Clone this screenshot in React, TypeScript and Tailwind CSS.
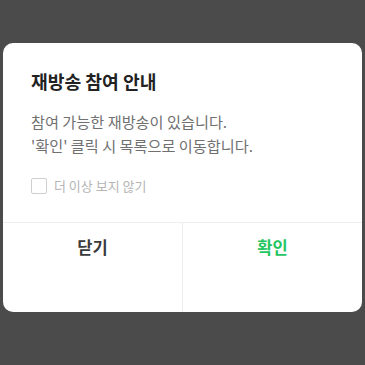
export default function App() {
  return (
    <div
      className="w-[365px] h-[365px] bg-[#4b4b4b] pt-[43px] px-[3px]"
      style={{ fontFamily: '"Noto Sans CJK KR", "Noto Sans", sans-serif' }}
    >
      <div className="bg-white rounded-[10px] overflow-hidden h-[269px] flex flex-col">
        <div className="px-[28px] pt-[24px] flex-1">
          <h2 className="text-[18.2px] font-bold text-[#222] leading-[28px]">재방송 참여 안내</h2>
          <p className="mt-[14px] text-[15.2px] leading-[24px] text-[#707070]">
            참여 가능한 재방송이 있습니다.
            <br />
            '확인' 클릭 시 목록으로 이동합니다.
          </p>
          <label className="mt-[19px] flex items-center gap-[7px]">
            <span className="w-[16px] h-[16px] border border-[#cfcfcf] rounded-[2px] bg-white" />
            <span className="text-[13px] text-[#b5b5b5]">더 이상 보지 않기</span>
          </label>
        </div>
        <div className="h-[90px] border-t border-[#eeeeee] flex">
          <button className="flex-1 border-r border-[#eeeeee] pt-[12px] flex justify-center items-start text-[16.5px] font-bold text-[#3a3a3a]">
            닫기
          </button>
          <button className="flex-1 pt-[12px] flex justify-center items-start text-[16.5px] font-bold text-[#22c560]">
            확인
          </button>
        </div>
      </div>
    </div>
  );
}
